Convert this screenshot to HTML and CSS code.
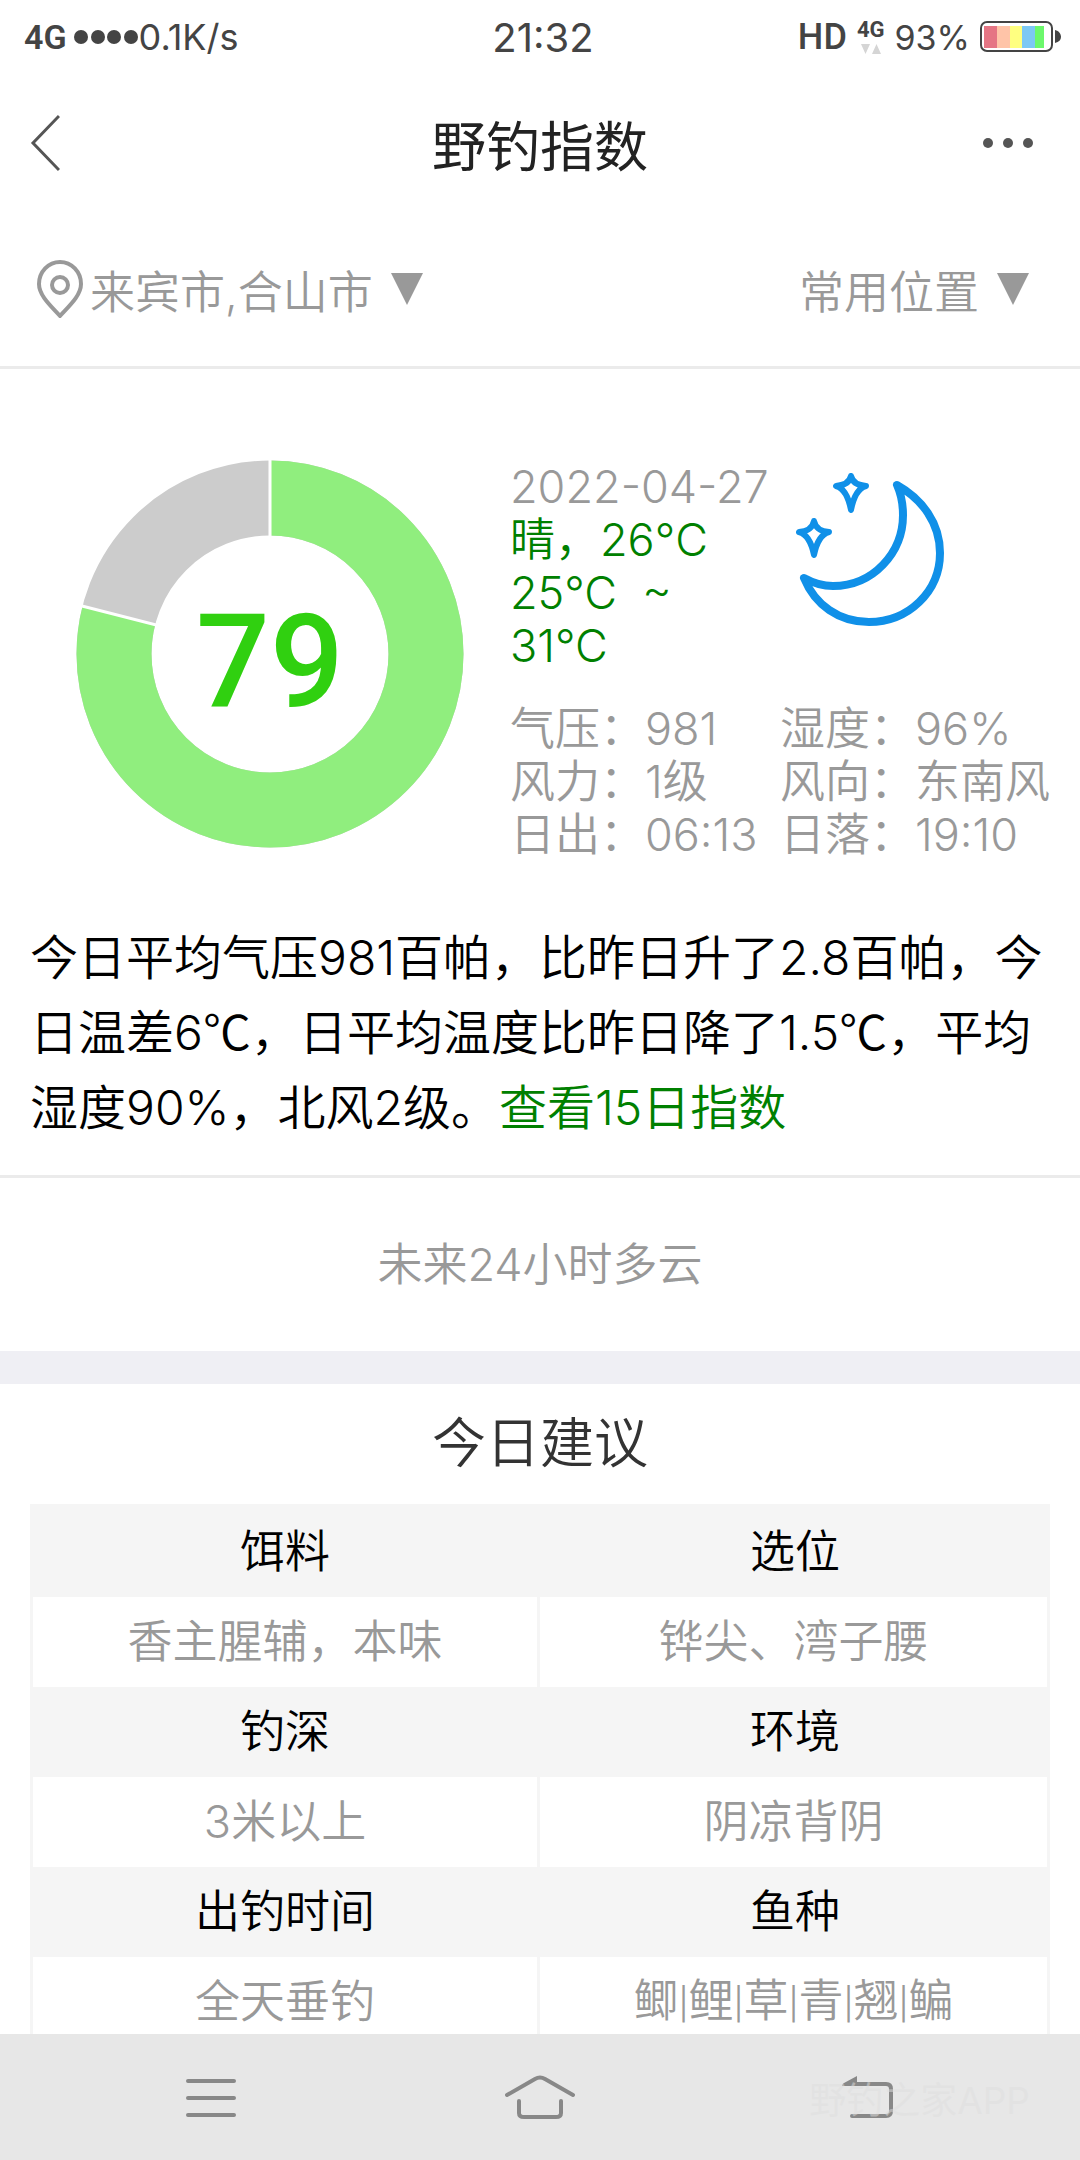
FILE: index.html
```html
<!DOCTYPE html>
<html lang="zh-CN">

<head>
    <meta charset="UTF-8">
    <meta name="viewport" content="width=device-width, initial-scale=1.0">
    <title>野钓指数</title>
    <link rel="stylesheet" href="styles.css">
</head>

<body>

    <div class="status-bar">
        <div class="status-left">
            <span class="network">4G</span>
            <svg class="signal" viewBox="0 0 66 16" aria-hidden="true">
                <circle cx="8" cy="8" r="7" />
                <circle cx="25" cy="8" r="7" />
                <circle cx="41" cy="8" r="7" />
                <circle cx="58" cy="8" r="7" />
            </svg>
            <span>0.1K/s</span>
        </div>
        <div class="status-time">21:32</div>
        <div class="status-right">
            <span class="hd">HD</span>
            <span class="data">
                <span class="data-label">4G</span>
                <svg class="data-arrows" viewBox="0 0 20 10" aria-hidden="true">
                    <path d="M0 0h9l-4.500 10zM11 10h9l-4.500-10z" />
                </svg>
            </span>
            <span>93%</span>
            <svg class="battery" viewBox="0 0 82 32" aria-hidden="true">
                <rect x="1" y="1" width="71" height="29" rx="6" fill="#fff" stroke="#444" stroke-width="2" />
                <path d="M4 5h13v22H4z" fill="#e57584" />
                <path d="M17 5h13v22H17z" fill="#ffc4a8" />
                <path d="M30 5h12v22H30z" fill="#ffff80" />
                <path d="M42 5h13v22H42z" fill="#7cc8f4" />
                <path d="M55 5h9v22h-9z" fill="#6cf86c" />
                <path d="M75 9c4 1 6 4 6 7s-2 5-6 6z" fill="#444" />
            </svg>
        </div>
    </div>

    <header class="header">
        <button class="header-btn" type="button" aria-label="返回">
            <svg class="icon-back" viewBox="0 0 30 58" aria-hidden="true">
                <path d="M29 2L3 29l26 27" />
            </svg>
        </button>
        <h1>野钓指数</h1>
        <button class="header-btn more" type="button" aria-label="更多">
            <svg class="icon-more" viewBox="0 0 52 12" aria-hidden="true">
                <circle cx="6" cy="6" r="5" />
                <circle cx="26" cy="6" r="5" />
                <circle cx="46" cy="6" r="5" />
            </svg>
        </button>
    </header>

    <main class="content">
        <div class="location">
            <button class="location-btn" type="button">
                <svg class="icon-pin" viewBox="0 0 46 58" aria-hidden="true">
                    <path d="M23 56C15 47 2 36 2 24a21 22 0 0 1 42 0c0 12-13 23-21 32z" />
                    <circle cx="23" cy="25" r="8" />
                </svg>
                <span>来宾市,合山市</span>
                <svg class="icon-down" viewBox="0 0 32 32" aria-hidden="true"><path d="M0 0h32L16 32z" /></svg>
            </button>
            <button class="location-btn" type="button">
                <span>常用位置</span>
                <svg class="icon-down" viewBox="0 0 32 32" aria-hidden="true"><path d="M0 0h32L16 32z" /></svg>
            </button>
        </div>

        <section class="weather">
            <div class="gauge">
                <svg class="gauge-ring" viewBox="0 0 388 388" aria-hidden="true">
                    <circle cx="194" cy="194" r="156" fill="none" stroke="#ccc" stroke-width="75" />
                    <circle cx="194" cy="194" r="156" fill="none" stroke="#90ee7e" stroke-width="75"
                        pathLength="100" stroke-dasharray="79 21" transform="rotate(-90 194 194)" />
                    <path d="M194 194V0M194 194L6 146" stroke="#fff" stroke-width="3" />
                </svg>
                <span class="gauge-value">79</span>
            </div>
            <div class="weather-info">
                <div class="weather-now">
                    <div>
                        <div>2022-04-27</div>
                        <div class="green">晴，26°C<br>25°C &nbsp;~<br>31°C</div>
                    </div>
                    <svg class="icon-moon" viewBox="0 0 160 160" aria-hidden="true">
                        <path class="moon" d="M102 12C127 26 145 50 145 80C145 119 113 149 74 149C44 149 20 132 9 105C18 110 27 113 38 113C78 113 108 80 108 42C108 31 106 21 102 12Z" />
                        <path class="star" d="M56 3Q58 12 71 13Q60 16 56 37Q52 16 41 13Q54 12 56 3Z" />
                        <path class="star" d="M19 48Q21 58 34 59Q23 62 19 82Q15 62 4 59Q17 58 19 48Z" />
                    </svg>
                </div>
                <div class="weather-detail">
                    <div>气压：981</div>
                    <div>湿度：96%</div>
                    <div>风力：1级</div>
                    <div>风向：东南风</div>
                    <div>日出：06:13</div>
                    <div>日落：19:10</div>
                </div>
            </div>
            <p class="summary">今日平均气压981百帕，比昨日升了2.8百帕，今日温差6<span class="unit">℃</span>，日平均温度比昨日降了1.5<span class="unit">℃</span>，平均湿度90%，北风2级。<a class="green" href="#">查看15日指数</a></p>
        </section>

        <p class="forecast">未来24小时多云</p>

        <section class="advice">
            <h2>今日建议</h2>
            <table>
                <tr>
                    <th>饵料</th>
                    <th>选位</th>
                </tr>
                <tr>
                    <td>香主腥辅，本味</td>
                    <td>铧尖、湾子腰</td>
                </tr>
                <tr>
                    <th>钓深</th>
                    <th>环境</th>
                </tr>
                <tr>
                    <td>3米以上</td>
                    <td>阴凉背阴</td>
                </tr>
                <tr>
                    <th>出钓时间</th>
                    <th>鱼种</th>
                </tr>
                <tr>
                    <td>全天垂钓</td>
                    <td class="fish">鲫|鲤|草|青|翘|鳊</td>
                </tr>
            </table>
        </section>
    </main>

    <nav class="nav-bar">
        <button type="button" aria-label="菜单">
            <svg viewBox="0 0 72 44" aria-hidden="true">
                <path d="M13 6h46M13 23h46M13 40h46" />
            </svg>
        </button>
        <button type="button" aria-label="主页">
            <svg viewBox="0 0 72 44" aria-hidden="true">
                <path d="M3 20L31 4q5-3 10 0l28 16M15 26v12q0 4 5 4h32q5 0 5-4V26" />
            </svg>
        </button>
        <button type="button" aria-label="返回">
            <svg viewBox="0 0 72 44" aria-hidden="true">
                <path d="M19 41h34q5 0 5-5V14q0-5-5-5H20" />
                <path class="fill" d="M9 11q0-2 2-3L24 1v10z" />
            </svg>
        </button>
        <span class="watermark">野钓之家APP</span>
    </nav>

</body>

</html>
```
FILE: styles.css
```css
* {
    box-sizing: border-box;
}

body {
    display: flex;
    flex-direction: column;
    height: 100vh;
    margin: 0;
    background-color: #fff;
    color: #999;
    font-family: Inter, "Noto Sans CJK SC", sans-serif;
    font-size: 45px;
    font-weight: 350;
}

h1,
h2,
p {
    margin: 0;
}

button {
    padding: 0;
    border: none;
    background: none;
    color: inherit;
    font: inherit;
    cursor: pointer;
}

svg {
    display: block;
    flex-shrink: 0;
}

.green {
    color: #008000;
    text-decoration: none;
}

/* status bar */
.status-bar {
    display: grid;
    grid-template-columns: 1fr auto 1fr;
    align-items: center;
    height: 74px;
    padding: 0 18px 0 24px;
    color: #444;
    font-size: 34px;
    font-weight: 400;
}

.status-left,
.status-right {
    display: flex;
    align-items: center;
}

.status-left {
    font-size: 36px;
}

.status-right {
    justify-content: flex-end;
    gap: 10px;
}

.network {
    margin-right: 6px;
    font-family: Roboto, sans-serif;
    font-size: 34px;
    font-weight: 600;
}

.signal {
    width: 66px;
    height: 16px;
    fill: #444;
}

.status-time {
    font-size: 40px;
}

.hd {
    font-family: Roboto, sans-serif;
    font-size: 36px;
    font-weight: 500;
}

.data {
    display: flex;
    flex-direction: column;
    align-items: center;
    gap: 4px;
}

.data-label {
    font-family: Roboto, sans-serif;
    font-size: 22px;
    font-weight: 700;
    line-height: 20px;
}

.data-arrows {
    width: 20px;
    height: 10px;
    fill: #d5d5d5;
}

.battery {
    width: 82px;
    height: 32px;
}

/* title bar */
.header {
    display: grid;
    grid-template-columns: 1fr auto 1fr;
    align-items: center;
    height: 138px;
    padding: 0 30px;
    color: #222;
}

.header h1 {
    font-size: 54px;
    font-weight: 400;
}

.header-btn {
    justify-self: start;
}

.header-btn.more {
    justify-self: end;
    padding-right: 16px;
}

.icon-back {
    width: 30px;
    height: 58px;
    fill: none;
    stroke: #555;
    stroke-width: 3;
}

.icon-more {
    width: 52px;
    height: 12px;
    fill: #555;
}

.content {
    flex: 1;
    min-height: 0;
    overflow-y: auto;
    scrollbar-width: none;
}

/* location */
.location {
    display: flex;
    justify-content: space-between;
    height: 157px;
    padding: 0 51px 0 37px;
    border-bottom: 3px solid #ebebeb;
}

.location-btn {
    display: flex;
    align-items: center;
    gap: 7px;
}

.location-btn .icon-down {
    margin-left: 11px;
}

.icon-pin {
    width: 46px;
    height: 58px;
    fill: none;
    stroke: #999;
    stroke-width: 4;
}

.icon-down {
    width: 32px;
    height: 32px;
    fill: #999;
}

/* weather */
.weather {
    display: grid;
    grid-template-columns: 8fr 9fr;
    padding: 91px 30px 30px;
    border-bottom: 3px solid #ebebeb;
}

.gauge {
    display: grid;
    place-items: center;
    align-self: start;
}

.gauge-ring,
.gauge-value {
    grid-area: 1 / 1;
}

.gauge-ring {
    width: 388px;
    height: 388px;
}

.gauge-value {
    padding-top: 16px;
    color: #30d010;
    font-family: Roboto, sans-serif;
    font-size: 130px;
    font-weight: 500;
    line-height: 1;
}

.weather-info {
    line-height: 53px;
}

.weather-now,
.weather-detail {
    display: grid;
    grid-template-columns: 1fr 1fr;
}

.weather-detail {
    margin-top: 30px;
    white-space: nowrap;
}

.icon-moon {
    width: 160px;
    height: 160px;
    margin: 13px 0 0 15px;
    fill: none;
    stroke: #1090e8;
    stroke-linejoin: round;
}

.moon {
    stroke-width: 8;
}

.star {
    stroke-width: 6;
}

.summary {
    grid-column: 1 / 3;
    margin-top: 59px;
    color: #000;
    font-size: 48px;
    line-height: 75px;
}

.unit {
    font-family: "Noto Sans CJK SC", sans-serif;
    line-height: 1;
}

.forecast {
    border-bottom: 33px solid #efeff4;
    line-height: 173px;
    text-align: center;
}

/* advice */
.advice {
    padding: 0 30px;
}

.advice h2 {
    color: #333;
    font-size: 54px;
    font-weight: 350;
    line-height: 120px;
    text-align: center;
}

table {
    width: 100%;
    border-top: 3px solid #f5f5f5;
    border-spacing: 0;
    table-layout: fixed;
}

th,
td {
    height: 90px;
    padding: 0;
    font-weight: 350;
    line-height: 60px;
    text-align: center;
}

th {
    background-color: #f5f5f5;
    color: #000;
}

td {
    border-right: 3px solid #f5f5f5;
}

td:first-child {
    border-left: 3px solid #f5f5f5;
}

.fish {
    font-family: Roboto, "Noto Sans CJK SC", sans-serif;
}

/* system navigation */
.nav-bar {
    position: relative;
    display: flex;
    justify-content: space-between;
    flex-shrink: 0;
    height: 126px;
    padding: 0 175px;
    background-color: #e7e7e7;
}

.nav-bar svg {
    width: 72px;
    height: 44px;
    fill: none;
    stroke: #888;
    stroke-linecap: round;
    stroke-width: 4;
}

.nav-bar .fill {
    fill: #888;
    stroke: none;
}

.watermark {
    position: absolute;
    right: 50px;
    bottom: 36px;
    color: rgba(222, 222, 222, 0.5);
    font-size: 37px;
    font-weight: 400;
    line-height: 46px;
}
```
